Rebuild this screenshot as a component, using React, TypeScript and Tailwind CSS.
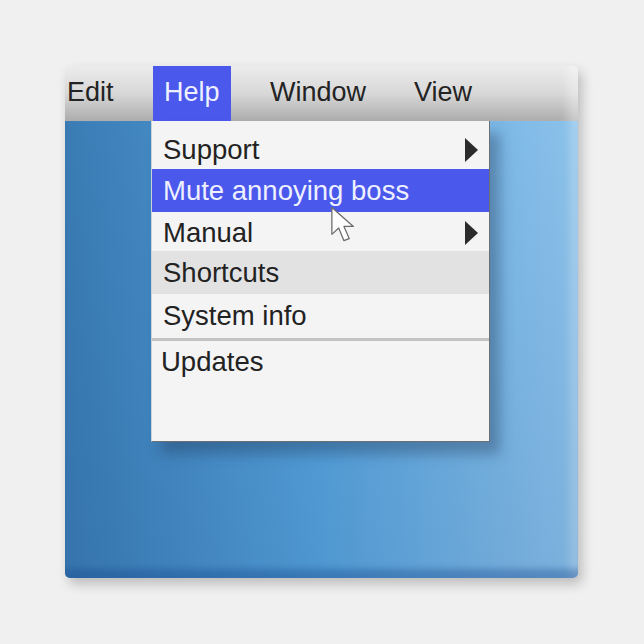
import React from 'react';

function Arrow() {
  return (
    <svg width="13" height="24" viewBox="0 0 13 24" className="shrink-0">
      <path d="M0 0 L13 12 L0 24 Z" fill="#2b2b2b" />
    </svg>
  );
}

function Cursor() {
  return (
    <svg width="30" height="42" viewBox="0 0 28 40" className="absolute left-[265px] top-[85px] pointer-events-none">
      <path
        d="M1.5 1.5 L1.5 27 L8 21 L13 33 L18 31 L13 19.5 L22 19.5 Z"
        fill="#ffffff"
        stroke="#6b6b6b"
        strokeWidth="1.2"
        strokeLinejoin="round"
      />
    </svg>
  );
}

export default function App() {
  return (
    <div className="w-[644px] h-[644px] bg-[#f0f0f0] pt-[66px] pl-[65px]" style={{ fontFamily: '"Liberation Sans", Arial, sans-serif' }}>
      <div className="relative w-[513px] h-[512px] flex flex-col rounded-[5px] overflow-hidden shadow-[4px_6px_12px_rgba(0,0,0,0.22)]">
        {/* Menu bar */}
        <div className="h-[55px] shrink-0 flex items-stretch bg-gradient-to-b from-[#ececec] via-[#d8d8d8] to-[#acacac] shadow-[inset_-16px_0_10px_-6px_rgba(255,255,255,0.35)] text-[27px] text-[#232323]">
          <div className="w-[88px] pl-[2px] pt-[6px]">Edit</div>
          <div className="w-[78px] bg-[#4a58ec] text-[#eef0ff] pl-[11px] pt-[6px]">Help</div>
          <div className="w-[183px] pl-[39px] pt-[6px]">Window</div>
          <div className="pt-[6px]">View</div>
        </div>

        {/* Desktop */}
        <div className="relative flex-1 bg-gradient-to-r from-[#3a7bb4] via-[#56a3dc] to-[#8cc2ea] shadow-[inset_0_-13px_6px_-4px_rgba(20,70,140,0.35),inset_-14px_0_8px_-6px_rgba(255,255,255,0.25)]">
          <div className="absolute inset-0 bg-gradient-to-b from-transparent to-[rgba(20,60,120,0.12)]" />

          {/* Dropdown */}
          <div className="absolute left-[86px] top-0 w-[339px] h-[321px] flex flex-col bg-[#f4f4f4] border-r border-b border-[#6c6f74] border-l border-l-[#c9d3dc] shadow-[10px_12px_12px_rgba(30,50,80,0.35)] text-[27.5px] text-[#222]">
            <div className="h-[48px] flex items-center justify-between pl-[11px] pr-[11px] pt-[10px]">
              <span>Support</span>
              <Arrow />
            </div>
            <div className="h-[43px] flex items-center pl-[11px] bg-[#4a58ec] text-[#eef0ff]">
              <span>Mute annoying boss</span>
            </div>
            <div className="h-[39px] flex items-center justify-between pl-[11px] pr-[11px] pt-[2px]">
              <span>Manual</span>
              <Arrow />
            </div>
            <div className="h-[43px] flex items-center pl-[11px] bg-[#e2e2e2]">
              <span>Shortcuts</span>
            </div>
            <div className="h-[44px] flex items-center pl-[11px]">
              <span>System info</span>
            </div>
            <div className="h-[3px] bg-[#c3c3c3]" />
            <div className="h-[42px] flex items-center pl-[9px]">
              <span>Updates</span>
            </div>
            <div className="flex-1" />
          </div>

          <Cursor />
        </div>
      </div>
    </div>
  );
}
